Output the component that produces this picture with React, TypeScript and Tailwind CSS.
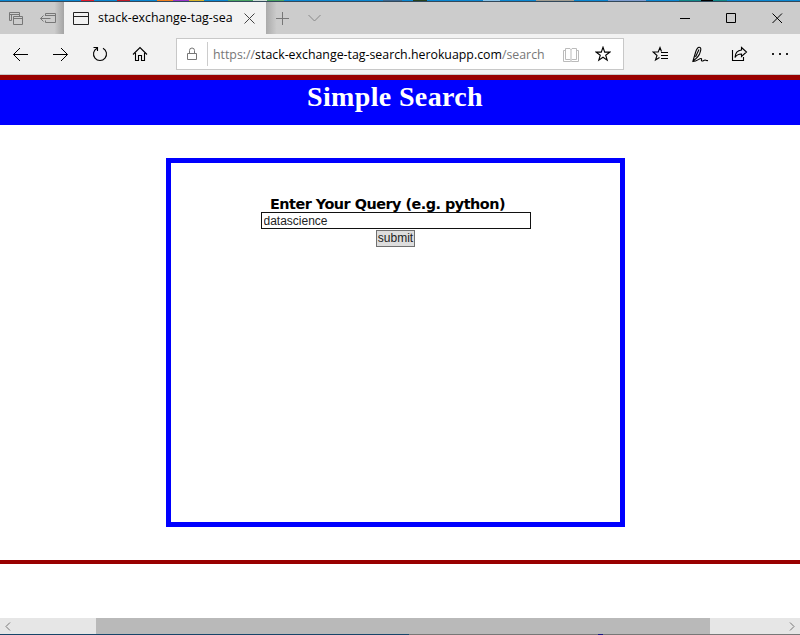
import React from "react";

type IconProps = { w: number; h: number; className?: string; sw?: number; children: React.ReactNode };

function Icon({ w, h, className = "", sw = 1, children }: IconProps) {
  return (
    <svg width={w} height={h} viewBox={`0 0 ${w} ${h}`} fill="none" stroke="currentColor" strokeWidth={sw} className={`block shrink-0 ${className}`}>
      {children}
    </svg>
  );
}

function DesktopStrip() {
  return (
    <div className="flex h-px w-full bg-[#0a86d0]">
      <div className="ml-[81px] w-[13px] bg-[#e01b2c]" />
      <div className="ml-[23px] w-[13px] bg-[#c01c28]" />
      <div className="ml-[27px] w-4 bg-[#f08020]" />
      <div className="w-4 bg-[#9a35c8]" />
      <div className="w-[15px] bg-[#d8b42c]" />
      <div className="ml-[24px] w-[25px] bg-[#4aa564]" />
      <div className="w-[14px] bg-[#cfe0d8]" />
      <div className="w-[17px] bg-[#4aa564]" />
      <div className="ml-[99px] w-[19px] bg-[#3c6890]" />
      <div className="ml-[11px] w-[14px] bg-[#26401c]" />
      <div className="ml-[56px] w-[17px] bg-[#8ac4e8]" />
      <div className="ml-[36px] w-[38px] bg-[#a09c90]" />
      <div className="ml-[34px] w-[38px] bg-[#7c9cd0]" />
      <div className="ml-[33px] w-[22px] bg-[#108888]" />
      <div className="w-[12px] bg-black" />
      <div className="w-[14px] bg-[#108888]" />
    </div>
  );
}

function TabBar() {
  return (
    <div className="flex h-8 bg-[#cccccc] text-black">
      <div className="flex w-16 shrink-0 bg-linear-to-r from-[#cccccc] from-85% to-[#a4a4a4] pl-[9px] pt-[9px] text-[#777]">
        <Icon w={15} h={15}>
          <path d="M2.500 9.500h-2v-8h10v2M.5 3.500h10" />
          <path d="M4.500 5.500h9v8h-9zM4.500 7.500h9M2.500 9.500v-6h8v2" />
        </Icon>
        <Icon w={17} h={13} className="ml-4">
          <path d="M5.500 5V2.500h10v9h-10V9.500M5.500 4.500h10M.5 7.500h10M3.500 4.500l-3 3 3 3" />
        </Icon>
      </div>
      <div className="flex w-[202px] shrink-0 items-center bg-[#f2f2f2] pl-[9px]">
        <Icon w={16} h={13} className="text-[#222]">
          <path d="M.5.5h15v12H.5zM.5 4.500h15" />
        </Icon>
        <span className="ml-[9px] w-[136px] whitespace-nowrap font-['Open_Sans','Noto_Sans',sans-serif] text-[12.4px] leading-4">stack-exchange-tag-sea</span>
        <Icon w={11} h={11} className="ml-[10px] text-[#444]">
          <path d="M.5.5l10 10M10.500.5l-10 10" />
        </Icon>
      </div>
      <div className="flex flex-1 bg-linear-to-r from-[#aaaaaa] to-[#cccccc] to-2% pt-[10px]">
        <Icon w={13} h={13} className="ml-[10px] text-[#777]">
          <path d="M6.500 0v13M0 6.500h13" />
        </Icon>
        <Icon w={13} h={13} className="ml-[19px] text-[#888]">
          <path d="M.5 3l6 6 6-6" />
        </Icon>
        <Icon w={10} h={12} className="ml-auto">
          <path d="M0 6.500h10" />
        </Icon>
        <Icon w={10} h={12} className="ml-9">
          <path d="M.5 1.500h9v9h-9z" />
        </Icon>
        <Icon w={11} h={12} className="ml-9 mr-[17px]">
          <path d="M.5 1.500l9.500 9.500M10 1.500L.5 11" />
        </Icon>
      </div>
    </div>
  );
}

function Toolbar() {
  return (
    <div className="flex h-10 items-center bg-[#f2f2f2] text-black">
      <Icon w={16} h={15} className="ml-[12px]">
        <path d="M1.500 7.500H16M8 1L1.500 7.500 8 14" />
      </Icon>
      <Icon w={16} h={15} className="ml-[25px]">
        <path d="M0 7.500h14.500M8 1l6.500 6.500L8 14" />
      </Icon>
      <Icon w={16} h={16} className="ml-[23px]" sw={1.1}>
        <path d="M5 2.200a6.500 6.500 0 1 0 6 0M1.500 1.500H5.500V5" />
      </Icon>
      <Icon w={16} h={16} className="ml-[24px]" sw={1.1}>
        <path d="M1 8.500l7-7 7 7M3.500 7v7.500h3V9.500h3v5h3V7" />
      </Icon>
      <div className="ml-[28px] flex h-8 w-[448px] shrink-0 items-center border border-[#c8c8c8] bg-white">
        <Icon w={12} h={14} className="ml-[9px] text-[#777]">
          <path d="M1.500 6.500h9v6h-9zM3.500 6V3.500a2.500 2.500 0 0 1 5 0V6" />
        </Icon>
        <div className="ml-[9px] h-6 w-px bg-[#ccc]" />
        <span className="ml-[5px] mt-[2px] w-[333px] shrink-0 whitespace-nowrap font-['Open_Sans','Noto_Sans',sans-serif] text-[12.35px] leading-4 text-[#777]">
          https://<span className="text-black">stack-exchange-tag-search.herokuapp.com</span>/search
        </span>
        <Icon w={16} h={14} className="ml-[17px] mt-[2px] text-[#bbb]">
          <path d="M2.500.5H7l1 1 1-1h4.500v11H9l-1 1-1-1H2.500zM8 1v11M2.500 2.500h-2v11H7l1-.500 1 .5h6.500v-11h-2" />
        </Icon>
        <Icon w={16} h={16} className="ml-4" sw={1.1}>
          <path d="M8 1.200l1.700 4.900h5.100l-4.100 3.100 1.500 5L8 11.200l-4.200 3 1.500-5L1.200 6.100h5.100z" />
        </Icon>
      </div>
      <Icon w={17} h={16} className="ml-[28px]" sw={1.1}>
        <path d="M9.500 5.500L8 1.500 6.200 6H1l4 3.500L3.500 14 7.500 11.500M9 6.500h7M9 9.500h7M9 12.500h7" />
      </Icon>
      <Icon w={17} h={17} className="ml-[23px]" sw={1.1}>
        <path d="M1 15L3.500 6.500C4.500 3 6 .5 8 1.500s.5 3.500-.500 6.500c-1 2.500-3 4.500-6.500 7zM3.500 11L7 3.500M1 15.500c4 0 6-3 8-3 1.500 0-.500 2.500 1 2.500s2-1 3-1 1 1 3 .500" />
      </Icon>
      <Icon w={17} h={16} className="ml-[22px]" sw={1.1}>
        <path d="M1.500 4v10.500h11V11M10.500 1.500L15.500 6l-5 4.500V8C7.500 8 5.500 9 4 11.500 4.200 7.500 6 4.500 10.500 4z" />
      </Icon>
      <div className="ml-6 flex gap-[5px]">
        <div className="size-[2px] bg-[#222]" />
        <div className="size-[2px] bg-[#222]" />
        <div className="size-[2px] bg-[#222]" />
      </div>
    </div>
  );
}

function SearchPage() {
  return (
    <main className="flex h-[543px] flex-col bg-white">
      <header className="h-[50px] border-t-[5px] border-[#990000] bg-[#0000ff] pr-[10px] text-center">
        <h1 className="font-['Liberation_Serif',serif] text-[28px] font-bold leading-[34px] tracking-[0.35px] text-white">Simple Search</h1>
      </header>
      <form className="ml-[166px] mt-[33px] flex h-[369px] w-[459px] flex-col items-center border-[5px] border-[#0000ff] pt-[32px]" onSubmit={(e) => e.preventDefault()}>
        <label htmlFor="query" className="mr-4 h-[17px] whitespace-nowrap pt-px font-['DejaVu_Sans',sans-serif] text-[14.4px] font-bold leading-[17px] tracking-[-0.5px] text-black">Enter Your Query (e.g. python)</label>
        <input id="query" defaultValue="datascience" className="h-[17px] w-[270px] border border-[#111] bg-white px-[2px] font-['Liberation_Sans',sans-serif] text-[12px] leading-[15px] text-[#222] outline-none" />
        <button className="mt-[1px] h-[17px] w-[39px] border border-[#707070] bg-[#dddddd] p-0 pb-px font-['Liberation_Sans',sans-serif] text-[12px] leading-[14px] text-[#222]">submit</button>
      </form>
      <div className="mt-[33px] h-1 bg-[#990000]" />
    </main>
  );
}

function Scrollbar() {
  return (
    <div className="flex h-4 items-center bg-[#e6e6e6] text-[#777]">
      <div className="flex w-24 pl-[5px]">
        <Icon w={6} h={9}><path d="M5 .5l-4 4 4 4" /></Icon>
      </div>
      <div className="h-4 w-[614px] bg-[#b9b9b9]" />
      <div className="flex flex-1 justify-end pr-[5px]">
        <Icon w={6} h={9}><path d="M1 .5l4 4-4 4" /></Icon>
      </div>
    </div>
  );
}

export default function App() {
  return (
    <div className="h-[635px] w-[800px] overflow-hidden">
      <DesktopStrip />
      <div className="h-px bg-[#33485a]" />
      <TabBar />
      <Toolbar />
      <div className="h-px bg-[#c8c8c8]" />
      <SearchPage />
      <Scrollbar />
      <div className="flex h-px bg-[#777]">
        <div className="w-[409px] bg-[#174569]" />
        <div className="ml-[189px] w-[5px] bg-[#171785]" />
      </div>
    </div>
  );
}
